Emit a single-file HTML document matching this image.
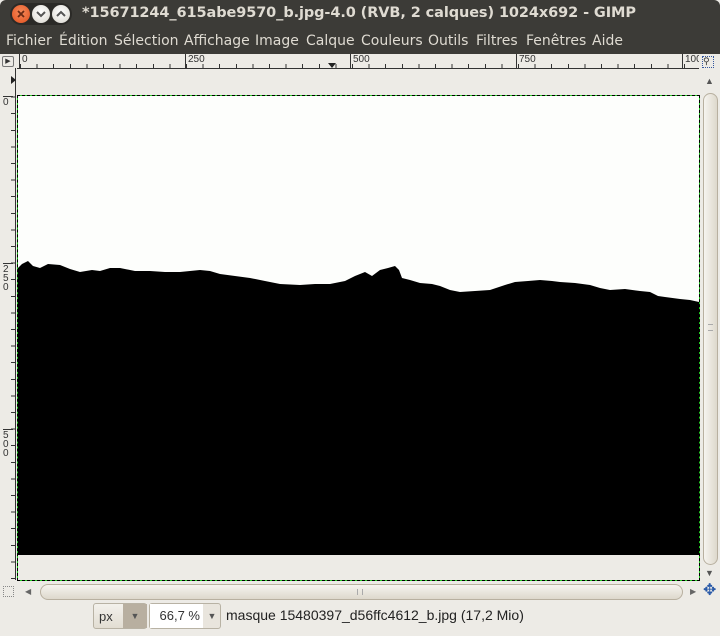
<!DOCTYPE html>
<html><head><meta charset="utf-8"><style>
*{margin:0;padding:0;box-sizing:border-box}
body{width:720px;height:636px;overflow:hidden;background:#edebe6;font-family:"Liberation Sans","DejaVu Sans",sans-serif;position:relative}
.abs{position:absolute}
#title{left:0;top:0;width:720px;height:27px;background:#3c3b37;border-radius:6px 6px 0 0}
#title .t{left:82px;top:5px;color:#dfdbd2;font-weight:bold;font-size:14.5px;font-family:"DejaVu Sans",sans-serif;letter-spacing:-0.1px}
.btn{width:18px;height:18px;border-radius:50%;top:5px}
#menu{left:0;top:27px;width:720px;height:27px;background:#3c3b37;color:#dfdbd2;font-size:14px;font-family:"DejaVu Sans",sans-serif}
#menu span{position:absolute;top:6px}
#hr{left:17px;top:54px;width:682px;height:15px;background:#edebe6;border-bottom:1px solid #333;
background-image:repeating-linear-gradient(90deg,#333 0 1px,transparent 1px 16.6px);background-size:100% 5px;background-repeat:no-repeat;background-position:3px 10px}
#hr span{position:absolute;top:0;font-size:10px;color:#333;padding-left:2px;border-left:1px solid #333;height:14px;line-height:11px}
#vr{left:0;top:68px;width:16px;height:512px;border-right:1px solid #333;background:#edebe6;
background-image:repeating-linear-gradient(180deg,#333 0 1px,transparent 1px 16.6px);background-size:5px 100%;background-repeat:no-repeat;background-position:11px 12px}
.vl{position:absolute;left:3px;font-size:10px;color:#333;line-height:9px;width:10px}
#img{left:18px;top:96px;width:681px;height:459px;background:#fdfefc}
#selg{left:17px;top:95px;width:683px;height:486px;border:1px solid #22cc22}
#sel{left:17px;top:95px;width:683px;height:486px;border:1px dashed #000}
#vs{left:703px;top:93px;width:15px;height:472px;border:1px solid #b8b0a0;border-radius:8px;background:linear-gradient(90deg,#f6f4ef,#ddd8cc)}
#hs{left:40px;top:584px;width:643px;height:16px;border:1px solid #b8b0a0;border-radius:8px;background:linear-gradient(180deg,#f6f4ef,#ddd8cc)}
.box{position:absolute;top:603px;height:26px;border:1px solid #b8b2a4;border-radius:3px;font-size:13px;color:#333}
</style></head><body>
<div id="title" class="abs">
 <div class="abs" style="left:10px;top:3px;width:62px;height:22px;border-radius:11px;background:#2b2a27"></div>
 <div class="abs btn" style="left:12px;background:radial-gradient(circle at 50% 40%,#f58a5a,#e2501e)"></div>
 <div class="abs btn" style="left:32px;background:radial-gradient(circle at 50% 40%,#fff,#d8d5cd)"></div>
 <div class="abs btn" style="left:52px;background:radial-gradient(circle at 50% 40%,#fff,#d8d5cd)"></div>
 <svg class="abs" style="left:12px;top:5px" width="60" height="18"><path d="M6 6l6 6M12 6l-6 6" stroke="#6a2a14" stroke-width="1.8"/><path d="M25 7l4 4 4-4" fill="none" stroke="#555" stroke-width="2"/><path d="M45 11l4-4 4 4" fill="none" stroke="#555" stroke-width="2"/></svg>
 <div class="abs t">*15671244_615abe9570_b.jpg-4.0 (RVB, 2 calques) 1024x692 - GIMP</div>
</div>
<div id="menu" class="abs">
<span style="left:6px">Fichier</span><span style="left:59px">Édition</span><span style="left:114px">Sélection</span><span style="left:184px">Affichage</span><span style="left:255px">Image</span><span style="left:306px">Calque</span><span style="left:361px">Couleurs</span><span style="left:428px">Outils</span><span style="left:476px">Filtres</span><span style="left:526px">Fenêtres</span><span style="left:592px">Aide</span>
</div>
<div class="abs" style="left:2px;top:56px;width:12px;height:11px;border:1px solid #777;border-radius:2px;font-size:7px;line-height:9px;text-align:center;color:#333">▶</div>
<div id="hr" class="abs">
<span style="left:2px">0</span><span style="left:168px">250</span><span style="left:333px">500</span><span style="left:499px">750</span><span style="left:665px;width:17px;overflow:hidden">1000</span>
<div class="abs" style="left:311px;top:9px;width:0;height:0;border-left:4px solid transparent;border-right:4px solid transparent;border-top:5px solid #222"></div>
</div>
<div class="abs" style="left:702px;top:56px;width:12px;height:12px;border:1px dotted #3558a0;font-size:9px;line-height:9px;color:#333">⚲</div>
<div id="vr" class="abs">
<div class="abs" style="left:11px;top:8px;width:0;height:0;border-top:4px solid transparent;border-bottom:4px solid transparent;border-left:5px solid #222"></div>
<div class="vl" style="top:28px;border-top:1px solid #333;padding-top:1px">0</div>
<div class="vl" style="top:195px;border-top:1px solid #333;padding-top:1px">2<br>5<br>0</div>
<div class="vl" style="top:361px;border-top:1px solid #333;padding-top:1px">5<br>0<br>0</div>
</div>
<div id="img" class="abs"></div>
<svg class="abs" style="left:0;top:0" width="720" height="636">
<polygon fill="#000" points="18,268 22,264 28,261 33,266 40,268 48,264 60,265 70,269 80,272 92,270 100,271 110,268 120,268 135,271 150,271 165,272 180,272 200,270 210,271 220,274 235,276 250,278 265,281 280,284 300,285 315,284 330,284 345,281 355,276 365,272 372,276 380,270 388,268 395,266 399,270 402,278 410,280 420,283 432,284 440,286 450,290 460,292 475,291 490,290 505,285 515,282 528,281 540,280 552,281 560,282 575,283 590,285 600,288 610,290 625,289 640,291 650,292 658,296 665,297 680,299 690,300 699,302 699,555 18,555"/>
</svg>
<div id="selg" class="abs"></div>
<div id="sel" class="abs"></div>
<div class="abs" style="left:705px;top:76px;font-size:9px;color:#555">▲</div>
<div id="vs" class="abs"><div class="abs" style="left:4px;top:230px;width:5px;height:7px;border-top:1px solid #aaa;border-bottom:1px solid #aaa"></div></div>
<div class="abs" style="left:705px;top:568px;font-size:9px;color:#555">▼</div>
<div class="abs" style="left:3px;top:586px;width:11px;height:11px;border:1px dotted #888"></div>
<div class="abs" style="left:25px;top:587px;font-size:8px;color:#666">◀</div>
<div id="hs" class="abs"><div class="abs" style="left:316px;top:4px;width:6px;height:6px;border-left:1px solid #aaa;border-right:1px solid #aaa"></div></div>
<div class="abs" style="left:690px;top:587px;font-size:8px;color:#666">▶</div>
<div class="abs" style="left:703px;top:583px;font-size:16px;color:#2a5aa8;line-height:16px">✥</div>
<div class="box" style="left:93px;width:54px;background:linear-gradient(#f3f1ec,#e2ddd2)"><span style="position:absolute;left:5px;top:5px">px</span><div style="position:absolute;left:29px;top:0;width:24px;height:24px;background:#b8afa0;color:#555;font-size:9px;text-align:center;line-height:24px">▼</div></div>
<div class="box" style="left:149px;width:72px;background:#e9e5dd"><div style="position:absolute;left:0;top:0;width:53px;height:24px;background:#fff;text-align:right;padding-right:3px;line-height:24px">66,7 %</div><div style="position:absolute;left:53px;top:0;width:18px;height:24px;color:#555;font-size:9px;text-align:center;line-height:24px">▼</div></div>
<div class="abs" style="left:226px;top:607px;font-size:14px;color:#222;font-family:'Liberation Sans',sans-serif">masque 15480397_d56ffc4612_b.jpg (17,2 Mio)</div>
</body></html>
